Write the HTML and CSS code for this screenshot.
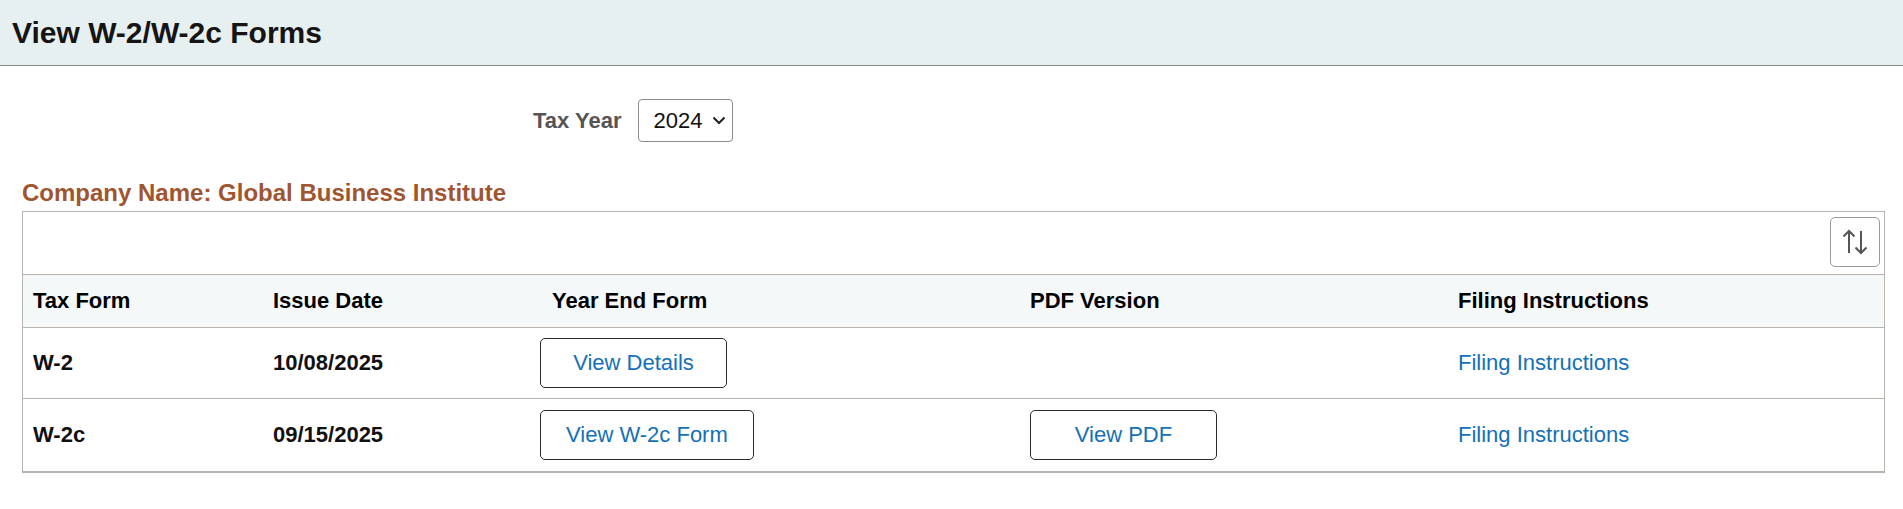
FILE: index.html
```html
<!DOCTYPE html>
<html lang="en">
<head>
    <meta charset="UTF-8">
    <meta name="viewport" content="width=device-width, initial-scale=1.0">
    <title>View W-2/W-2c Forms</title>
    <link rel="stylesheet" href="styles.css">
</head>
<body>
    <!-- Cabeçalho da página -->
    <div class="page-header">
        <h1>View W-2/W-2c Forms</h1>
    </div>

    <div class="content">
        <!-- Seleção do ano -->
        <div class="tax-year">
            <label for="ano">Tax Year</label>
            <span class="select-wrap">
                <select id="ano">
                    <option>2024</option>
                </select>
                <svg class="chevron" width="14" height="9" viewBox="0 0 14 9">
                    <path d="M1.5 1.5 L7 7 L12.5 1.5" fill="none" stroke="#222" stroke-width="2"/>
                </svg>
            </span>
        </div>

        <h2 class="company">Company Name: Global Business Institute</h2>

        <!-- Grade de formulários -->
        <div class="grid">
            <div class="grid-toolbar">
                <button class="sort-btn" title="Sort">
                    <svg width="26" height="26" viewBox="0 0 26 26">
                        <path d="M7 24 V2 M1.5 7.5 L7 2 L12.5 7.5" fill="none" stroke="#555" stroke-width="2"/>
                        <path d="M19 2 V24 M13.5 18.5 L19 24 L24.5 18.5" fill="none" stroke="#555" stroke-width="2"/>
                    </svg>
                </button>
            </div>
            <table>
                <colgroup>
                    <col class="c1">
                    <col class="c2">
                    <col class="c3">
                    <col class="c4">
                    <col>
                </colgroup>
                <thead>
                    <tr>
                        <th>Tax Form</th>
                        <th>Issue Date</th>
                        <th class="th-year">Year End Form</th>
                        <th>PDF Version</th>
                        <th>Filing Instructions</th>
                    </tr>
                </thead>
                <tbody>
                    <tr>
                        <td class="bold">W-2</td>
                        <td class="bold">10/08/2025</td>
                        <td><button class="btn">View Details</button></td>
                        <td></td>
                        <td><a href="#">Filing Instructions</a></td>
                    </tr>
                    <tr>
                        <td class="bold">W-2c</td>
                        <td class="bold">09/15/2025</td>
                        <td><button class="btn">View W-2c Form</button></td>
                        <td><button class="btn">View PDF</button></td>
                        <td><a href="#">Filing Instructions</a></td>
                    </tr>
                </tbody>
            </table>
        </div>
    </div>
</body>
</html>
```

FILE: styles.css
```css
* {
    margin: 0;
    padding: 0;
    box-sizing: border-box;
}

body {
    font-family: "Liberation Sans", Arial, sans-serif;
    font-size: 22px;
    color: #000;
    background-color: #fff;
}

.page-header {
    height: 66px;
    background-color: #e7f0f0;
    border-bottom: 1px solid #8a8a8a;
    display: flex;
    align-items: center;
    padding-left: 12px;
}

.page-header h1 {
    font-size: 30px;
    font-weight: bold;
    color: #161414;
}

.content {
    padding: 0 18px 0 22px;
}

.tax-year {
    display: flex;
    align-items: center;
    gap: 17px;
    padding-left: 511px;
    margin-top: 33px;
}

.tax-year label {
    font-weight: bold;
    color: #555;
}

.select-wrap {
    position: relative;
    display: inline-block;
}

.select-wrap select {
    appearance: none;
    -webkit-appearance: none;
    width: 95px;
    height: 43px;
    padding-left: 14px;
    border: 1px solid #8c8c8c;
    border-radius: 4px;
    background-color: #fff;
    font-family: inherit;
    font-size: 22px;
    color: #111;
}

.chevron {
    position: absolute;
    right: 7px;
    top: 17px;
    pointer-events: none;
}

.company {
    font-size: 24px;
    font-weight: bold;
    color: #9f552f;
    line-height: 27px;
    margin-top: 37px;
    margin-bottom: 5px;
}

.grid {
    border: 1px solid #b7b3ae;
    border-bottom: 2px solid #b7b3ae;
}

.grid-toolbar {
    display: flex;
    justify-content: flex-end;
    padding: 5px 4px 7px 0;
}

.sort-btn {
    width: 50px;
    height: 50px;
    border: 1px solid #999;
    border-radius: 5px;
    background-color: #fff;
    display: flex;
    align-items: center;
    justify-content: center;
    cursor: pointer;
}

table {
    width: 100%;
    border-collapse: collapse;
    table-layout: fixed;
}

col.c1 {
    width: 240px;
}

col.c2 {
    width: 267px;
}

col.c3 {
    width: 490px;
}

col.c4 {
    width: 428px;
}

th {
    height: 53px;
    text-align: left;
    font-weight: bold;
    padding-left: 10px;
    background-color: #f4f8f9;
    border-top: 1px solid #b7b3ae;
    border-bottom: 1px solid #b7b3ae;
}

th.th-year {
    padding-left: 22px;
}

td {
    height: 71px;
    padding-left: 10px;
    vertical-align: middle;
    border-bottom: 1px solid #b7b3ae;
}

tbody tr:last-child td {
    height: 72px;
    border-bottom: none;
}

td.bold {
    font-weight: bold;
    color: #111;
}

.btn {
    min-width: 187px;
    height: 50px;
    padding: 0 25px;
    border: 1px solid #2b2b2b;
    border-radius: 5px;
    background-color: #fff;
    font-family: inherit;
    font-size: 22px;
    color: #1470b8;
    cursor: pointer;
}

a {
    color: #1470b8;
    text-decoration: none;
}

a:hover {
    text-decoration: underline;
}
```
